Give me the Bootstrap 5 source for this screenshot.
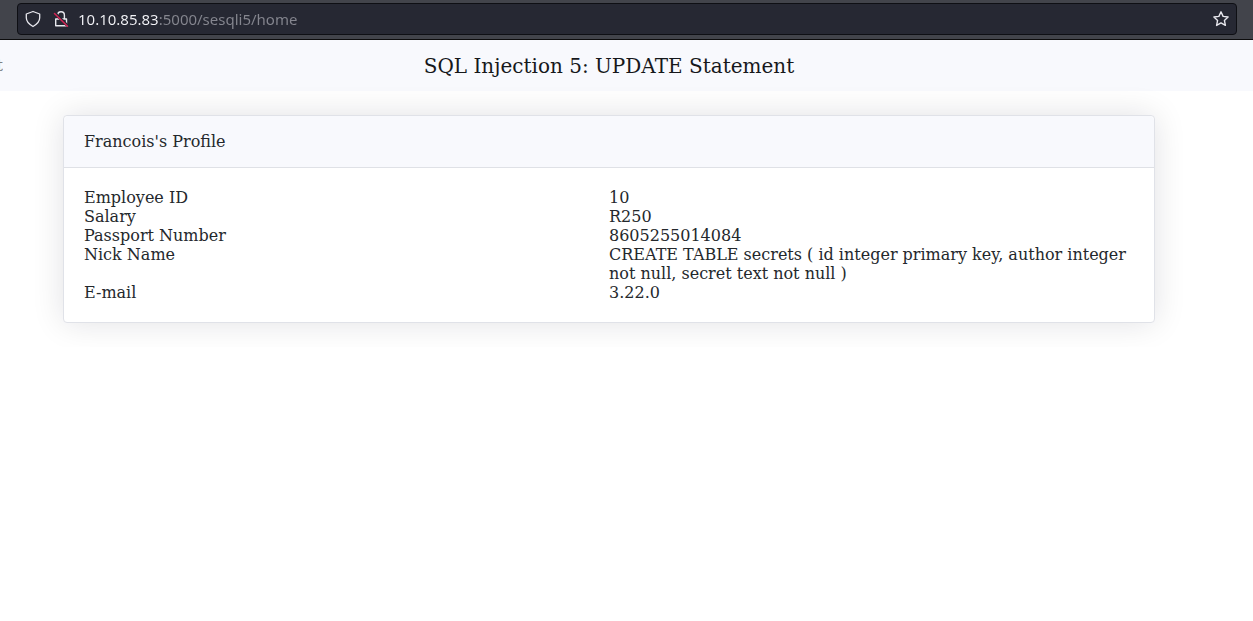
<!DOCTYPE html>
<html lang="en">
<head>
<meta charset="utf-8">
<meta name="viewport" content="width=device-width, initial-scale=1">
<title>SQL Injection 5: UPDATE Statement</title>
<link href="https://cdn.jsdelivr.net/npm/bootstrap@5.3.0/dist/css/bootstrap.min.css" rel="stylesheet">
<style>
  body { font-family: "DejaVu Serif", serif; color: #24282c; background: #fff; }
  .toolbar { height: 40px; padding: 3px 16px 4px 17px; background: #42444b; border-bottom: 1px solid #0c0c0d; }
  .urlbar { height: 32px; padding: 0 6px; background: #262833; border: 1px solid #0e0f14; border-radius: 4px; color: #e8e8ee; }
  .urlbar button { width: 18px; height: 18px; color: inherit; }
  .urlbar svg { display: block; width: 18px; height: 18px; }
  .lock-btn { margin-left: 10px; }
  .url-input {
    margin-left: 8px; padding: 0; border: 0; outline: 0; min-width: 0;
    font: 15px/20px "Noto Sans", sans-serif;
    background: linear-gradient(to right, #f4f4f8 80px, #85868f 80px);
    -webkit-background-clip: text; background-clip: text;
    -webkit-text-fill-color: transparent;
  }
  .titlebar { height: 51px; background: #f8f9fd; }
  .edge-link { width: 3px; overflow: hidden; color: #808184; font-size: 16px; line-height: 24px; }
  .page-title { font-size: 20px; line-height: 30px; color: #16181b; padding-right: 38px; }
  .page-main { padding: 24px 98px 24px 63px; }
  .profile { border: 1px solid #e0e2e8; border-radius: 4px; box-shadow: 0 0 32px rgba(20,20,30,.12); }
  .profile .card-header { padding: 16px 20px; line-height: 19px; background: #f8f9fd; border-bottom-color: #dfe1e6; }
  .profile .card-body { padding: 20px; }
  .facts { table-layout: fixed; line-height: 19px; }
  .facts th, .facts td { padding: 0; font-weight: 400; vertical-align: top; }
</style>
</head>
<body>
<header class="toolbar">
  <form class="urlbar d-flex align-items-center">
    <button type="button" class="btn p-0 border-0" aria-label="Tracking protection">
      <svg viewBox="0 0 18 18" fill="none" stroke="currentColor" stroke-width="1.3" stroke-linejoin="round"><path d="M9 1.5 15.700 4v3.800c0 3.800-2.900 6.600-6.700 8.700-3.800-2.100-6.700-4.900-6.700-8.700V4z"/></svg>
    </button>
    <button type="button" class="btn p-0 border-0 lock-btn" aria-label="Connection not secure">
      <svg viewBox="0 0 18 18" fill="none" stroke="currentColor" stroke-width="1.4" stroke-linejoin="round"><path d="M5.700 5.300C5.700 3.300 7 1.800 9 1.800s3.400 1.500 3.400 3.500v3.700M3.700 9h10.800v6.700H3.700z"/><path stroke="#262833" stroke-width="3" d="m3.300 3.500 12 12"/><path stroke="#d32454" stroke-width="1.500" stroke-linecap="round" d="m2.500 3.500 13 12.700"/></svg>
    </button>
    <input class="url-input flex-grow-1" type="text" aria-label="Address" value="10.10.85.83:5000/sesqli5/home" spellcheck="false">
    <button type="button" class="btn p-0 border-0" aria-label="Bookmark this page">
      <svg viewBox="0 0 18 18" fill="none" stroke="currentColor" stroke-width="1.400" stroke-linejoin="round"><path d="m9 1.800 2.100 4.600 5 .6-3.700 3.400 1 5L9 12.900l-4.400 2.500 1-5L1.900 7l5-.6z"/></svg>
    </button>
  </form>
</header>
<nav class="titlebar d-flex align-items-center">
  <a class="edge-link d-flex justify-content-end text-decoration-none" href="#">t</a>
  <h1 class="page-title flex-grow-1 text-center fw-normal mb-0">SQL Injection 5: UPDATE Statement</h1>
</nav>
<main class="page-main">
  <section class="card profile">
    <div class="card-header">Francois's Profile</div>
    <div class="card-body">
      <table class="facts w-100">
        <tbody>
          <tr><th scope="row">Employee ID</th><td>10</td></tr>
          <tr><th scope="row">Salary</th><td>R250</td></tr>
          <tr><th scope="row">Passport Number</th><td>8605255014084</td></tr>
          <tr><th scope="row">Nick Name</th><td>CREATE TABLE secrets ( id integer primary key, author integer not null, secret text not null )</td></tr>
          <tr><th scope="row">E-mail</th><td>3.22.0</td></tr>
        </tbody>
      </table>
    </div>
  </section>
</main>
<script src="https://cdn.jsdelivr.net/npm/bootstrap@5.3.0/dist/js/bootstrap.bundle.min.js"></script>
</body>
</html>
